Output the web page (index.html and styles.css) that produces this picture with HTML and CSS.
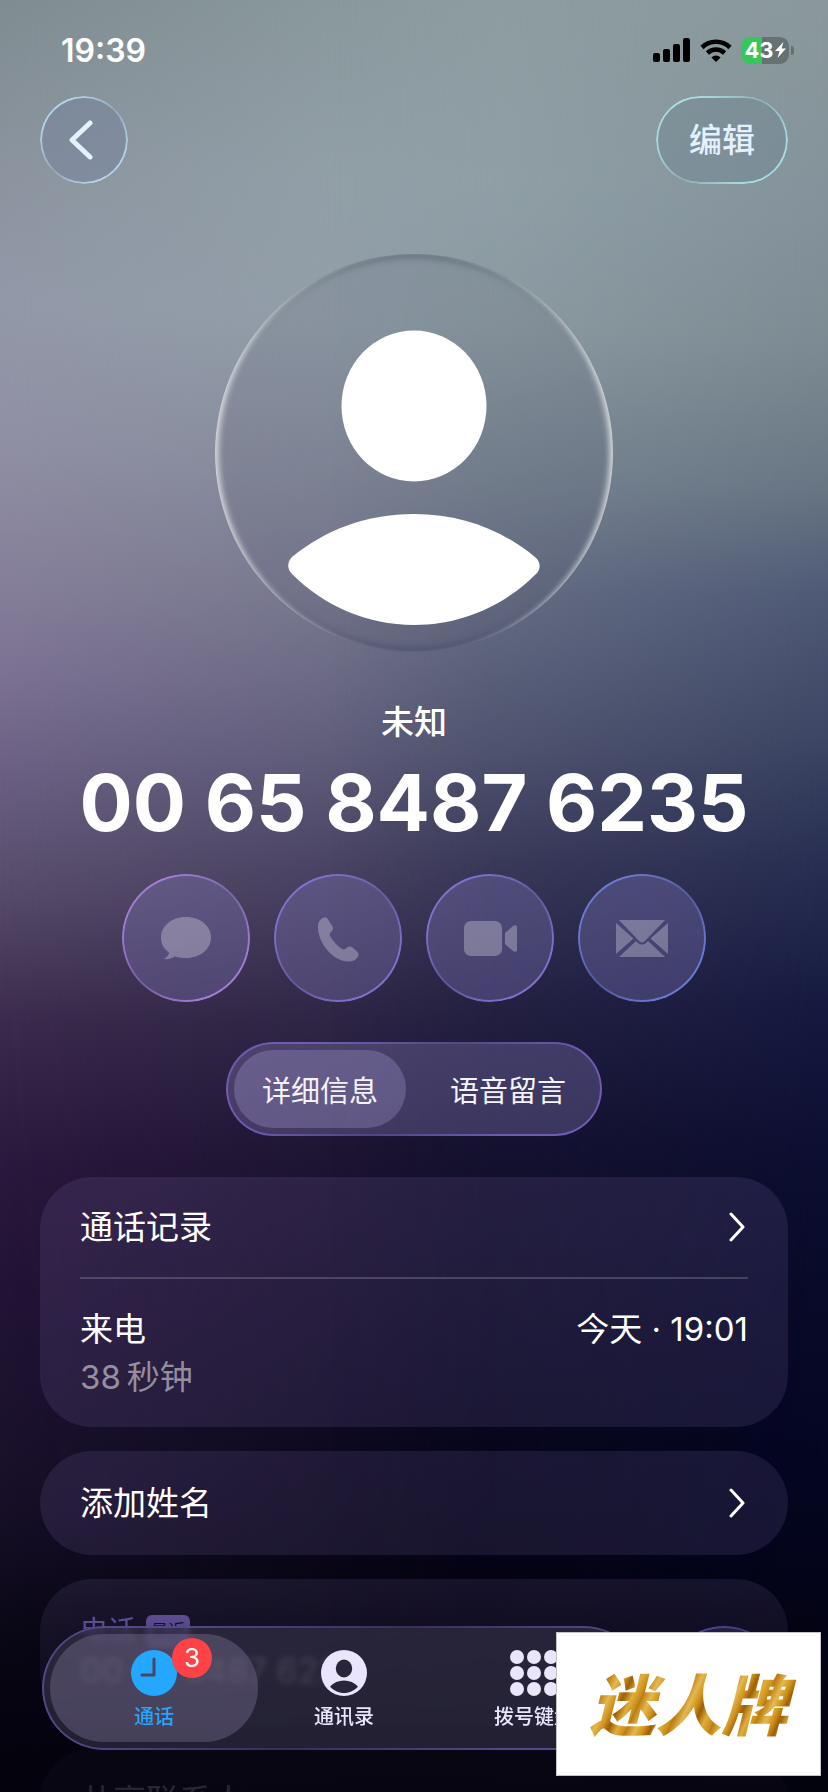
FILE: index.html
```html
<!DOCTYPE html>
<html lang="zh-CN">
<head>
    <meta charset="UTF-8">
    <meta name="viewport" content="width=device-width, initial-scale=1.0">
    <title>通话详情</title>
    <link rel="stylesheet" href="styles.css">
</head>
<body>
    <div class="screen">
        <div class="status-bar">
            <span class="status-time">19:39</span>
            <div class="status-icons">
                <svg class="signal" viewBox="0 0 38 24" aria-hidden="true">
                    <rect x="0" y="15" width="7" height="9" rx="2"/>
                    <rect x="10" y="11" width="7" height="13" rx="2"/>
                    <rect x="20" y="6" width="7" height="18" rx="2"/>
                    <rect x="30" y="0" width="7" height="24" rx="2"/>
                </svg>
                <svg class="wifi" viewBox="0 0 32 24" aria-hidden="true">
                    <path d="M2 9.5a20 20 0 0 1 28 0M7.4 15a12.5 12.5 0 0 1 17.2 0" fill="none" stroke="#000" stroke-width="4.6"/>
                    <path d="M16 24l-4.6-4.6a6.6 6.6 0 0 1 9.2 0z"/>
                </svg>
                <div class="battery">
                    <span>43</span>
                    <svg viewBox="0 0 11 16" aria-hidden="true"><path d="M8.5 0L0 9h4.5L2.5 16 11 6.5H6.5z"/></svg>
                </div>
            </div>
        </div>

        <header class="nav">
            <button class="glass nav-back" aria-label="返回">
                <svg viewBox="0 0 24 40" aria-hidden="true"><path d="M21 3L3 20l18 17"/></svg>
            </button>
            <button class="glass nav-edit">编辑</button>
        </header>

        <main>
            <div class="avatar">
                <svg viewBox="0 0 398 398" aria-hidden="true">
                    <ellipse cx="199" cy="152" rx="72.5" ry="75.5"/>
                    <path d="M77 303C110 276 151 260 199 260s88 16 121 43c6 5 6 12 1 17-32 32-75 51-122 51s-90-19-122-51c-5-5-5-12 0-17z"/>
                </svg>
            </div>
            <p class="caller-label">未知</p>
            <h1 class="caller-number">00 65 8487 6235</h1>

            <div class="actions">
                <button class="glass action" aria-label="信息">
                    <svg viewBox="0 0 54 54"><path d="M27 6C12.5 6 2 15 2 26.5c0 6.500 3 11.500 8 15 0 2.500-2 4.500-5 6.500 4 .5 8-.5 11-2.500 3 1 7 1.500 11 1.500 14.500 0 25-9 25-20.500S41.500 6 27 6z"/></svg>
                </button>
                <button class="glass action" aria-label="呼叫">
                    <svg viewBox="0 0 54 54"><path d="M7 16c0-5 2-7.500 5-9 2-1 4-.5 5 1.500l4.500 7c1 2 .5 3.500-1 5-2 2-2.500 3-1 5.500 3 5 7 9 11.500 12 2 1 3 .5 5-1.500 1.500-1.500 3.500-1.500 5.500 0l4.500 4c2 1.500 2 4 .5 6-2 2.500-4.500 4-9 4C23 50.500 7 33 7 16z"/></svg>
                </button>
                <button class="glass action" aria-label="视频通话">
                    <svg viewBox="0 0 54 54"><rect x="1" y="10" width="38" height="35" rx="7"/><path d="M42 22l8-7c2-1.500 4-1 4 1.500v22c0 2.500-2 3-4 1.500l-8-7z"/></svg>
                </button>
                <button class="glass action" aria-label="邮件">
                    <svg viewBox="0 0 54 54"><path d="M4 9h46L30.500 29.500c-2.500 2.500-4.500 2.500-7 0zM1 12l17.500 15.500L1 43zM53 12L35.500 27.500 53 43zM4 46l17-16 2 2c2.500 2 5.500 2 8 0l2-2 17 16z"/></svg>
                </button>
            </div>

            <div class="glass segmented" role="tablist">
                <button class="segment selected" role="tab" aria-selected="true">详细信息</button>
                <button class="segment" role="tab" aria-selected="false">语音留言</button>
            </div>

            <div class="cards">
                <section class="card">
                    <a class="row row-first" href="#history">
                        <span>通话记录</span>
                        <svg class="chevron" viewBox="0 0 16 30" aria-hidden="true"><path d="M2 2l12 13L2 28"/></svg>
                    </a>
                    <div class="call">
                        <div class="call-line">
                            <span>来电</span>
                            <time>今天 · 19:01</time>
                        </div>
                        <p class="duration">38&thinsp;秒钟</p>
                    </div>
                </section>

                <section class="card">
                    <a class="row" href="#name">
                        <span>添加姓名</span>
                        <svg class="chevron" viewBox="0 0 16 30" aria-hidden="true"><path d="M2 2l12 13L2 28"/></svg>
                    </a>
                </section>

                <section class="card phone-card">
                    <p class="phone-label">电话 <span class="recent">最近</span></p>
                    <p class="phone-number">00 65 8487 6235</p>
                </section>

                <section class="card share-card">
                    <a class="row" href="#share">共享联系人</a>
                </section>
            </div>
        </main>

        <div class="dock">
            <nav class="glass tabs">
                <a class="tab active" href="#calls">
                    <span class="tab-icon">
                        <svg viewBox="0 0 46 46" aria-hidden="true"><circle cx="23" cy="23" r="23"/><path class="hands" d="M23 9v16H11"/></svg>
                        <span class="badge">3</span>
                    </span>
                    <span>通话</span>
                </a>
                <a class="tab" href="#contacts">
                    <span class="tab-icon">
                        <svg viewBox="0 0 46 46" aria-hidden="true"><circle cx="23" cy="23" r="23"/><ellipse class="cut" cx="23" cy="18.5" rx="8.2" ry="9"/><path class="cut" d="M9 36.500c3.500-4 8.500-6 14-6s10.500 2 14 6c-3.500 4-8.500 6.500-14 6.500s-10.500-2.500-14-6.500z"/></svg>
                    </span>
                    <span>通讯录</span>
                </a>
                <a class="tab" href="#keypad">
                    <span class="tab-icon">
                        <svg class="keypad" viewBox="0 0 48 46" aria-hidden="true">
                            <circle cx="7" cy="7" r="7"/><circle cx="24" cy="7" r="7"/><circle cx="41" cy="7" r="7"/>
                            <circle cx="7" cy="23" r="7"/><circle cx="24" cy="23" r="7"/><circle cx="41" cy="23" r="7"/>
                            <circle cx="7" cy="39" r="7"/><circle cx="24" cy="39" r="7"/><circle cx="41" cy="39" r="7"/>
                        </svg>
                    </span>
                    <span>拨号键盘</span>
                </a>
            </nav>
            <button class="glass search" aria-label="搜索"></button>
        </div>

        <div class="brand"><span>迷人牌</span></div>
    </div>
</body>
</html>
```
FILE: styles.css
```css
* {
    box-sizing: border-box;
}

body {
    margin: 0;
    font-family: Inter, 'Noto Sans CJK SC', sans-serif;
    font-size: 33px;
    color: #fff;
    background: #05030f;
}

p, h1 {
    margin: 0;
}

button {
    font: inherit;
    color: inherit;
    border: 0;
    padding: 0;
    background: none;
}

a {
    color: inherit;
    text-decoration: none;
}

/* the wallpaper is three vertical gradients faded into each other */
.screen {
    position: relative;
    z-index: 0;
    height: 100vh;
    overflow: hidden;
    background: linear-gradient(#8f9fa3 0%, #95a5ab 10%, #92a1a8 18%, #808b98 26%, #6b7086 35%, #585a74 42%, #433f5e 48%, #2b2543 56%, #18132e 64%, #110d24 72%, #08061a 81%, #040210 90%, #03020c 100%);
}

.screen::before,
.screen::after {
    content: '';
    position: absolute;
    inset: 0;
    z-index: -1;
}

.screen::before {
    background: linear-gradient(#7f8c90 0%, #8b939e 9%, #9298a8 17%, #8f8fa3 25%, #857e99 33%, #7b7091 38%, #6b6083 43%, #564a68 50%, #3b2a4c 57%, #2a183d 65%, #221335 72%, #1a112c 81%, #0e0a1c 90%, #050310 100%);
    mask-image: linear-gradient(90deg, #000, transparent 60%);
}

.screen::after {
    background: linear-gradient(#8a989b 0%, #83929a 12%, #7c8b92 19%, #687684 27%, #4f5a76 33%, #3d4664 41%, #282f52 48%, #161a40 56%, #0d0f32 64%, #080a29 72%, #040622 81%, #030419 90%, #020210 100%);
    mask-image: linear-gradient(270deg, #000, transparent 60%);
}

/* glass surface with a rim lit from two corners */
.glass {
    --rim: #8270cf;
    position: relative;
    background: rgba(255, 255, 255, 0.1);
}

.glass::before {
    content: '';
    position: absolute;
    inset: 0;
    padding: 2px;
    border-radius: inherit;
    background: linear-gradient(135deg, var(--rim) 20%, transparent 50%, var(--rim) 80%);
    background-color: color-mix(in srgb, var(--rim) 40%, transparent);
    mask: linear-gradient(#000 0 0) content-box exclude, linear-gradient(#000 0 0);
    pointer-events: none;
}

.status-bar {
    height: 96px;
    padding: 4px 34px 0 61px;
    display: flex;
    justify-content: space-between;
    align-items: center;
}

.status-time {
    font-size: 32px;
    font-weight: 600;
}

.status-icons {
    display: flex;
    align-items: center;
    gap: 9px;
}

.signal {
    width: 38px;
    height: 24px;
}

.wifi {
    width: 32px;
    height: 24px;
}

.battery {
    position: relative;
    display: flex;
    align-items: center;
    justify-content: center;
    gap: 1px;
    width: 48px;
    height: 27px;
    margin-right: 5px;
    border-radius: 9px;
    background: linear-gradient(90deg, #34c759 43%, #667174 43%);
    font-size: 22px;
    font-weight: 700;
}

.battery svg {
    width: 11px;
    height: 16px;
    fill: #fff;
}

.battery::after {
    content: '';
    position: absolute;
    left: 50px;
    width: 3px;
    height: 9px;
    border-radius: 0 4px 4px 0;
    background: #667174;
}

.nav {
    display: flex;
    justify-content: space-between;
    padding: 0 40px;
    color: #e3f0ff;
}

.nav .glass {
    --rim: #a9dbe0;
    height: 88px;
    border-radius: 44px;
    background: rgba(90, 120, 135, 0.25);
}

.nav .nav-back {
    --rim: #b4d3e6;
    width: 88px;
    padding-right: 6px;
    background: rgba(110, 125, 155, 0.4);
}

.nav-back svg {
    display: block;
    width: 24px;
    height: 40px;
    margin: 0 auto;
    fill: none;
    stroke: #e3f0ff;
    stroke-width: 5;
    stroke-linecap: round;
    stroke-linejoin: round;
}

.nav .nav-edit {
    width: 132px;
    font-weight: 500;
    line-height: 40px;
}

main {
    text-align: center;
}

.avatar {
    width: 398px;
    height: 398px;
    margin: 70px auto 50px;
    border-radius: 50%;
    background: rgba(70, 75, 95, 0.12);
    box-shadow: inset 8px 0 6px -5px rgba(255, 255, 255, 0.8),
        inset -8px 0 6px -5px rgba(255, 255, 255, 0.8),
        inset 0 8px 6px -4px rgba(70, 85, 100, 0.5),
        inset 0 -8px 6px -4px rgba(60, 65, 95, 0.5);
}

.avatar svg {
    display: block;
    fill: #fff;
}

.caller-label {
    font-weight: 500;
    line-height: 40px;
}

.caller-number {
    margin-top: 20px;
    font-size: 79px;
    font-weight: 700;
    line-height: 80px;
    white-space: nowrap;
}

.actions {
    display: flex;
    justify-content: center;
    gap: 24px;
    margin-top: 32px;
}

.action {
    width: 128px;
    height: 128px;
    border-radius: 50%;
    background: rgba(130, 120, 190, 0.35);
}

.action:first-child {
    --rim: #a37cd8;
}

.action:last-child {
    --rim: #6b79d6;
}

.action svg {
    display: block;
    width: 54px;
    height: 54px;
    margin: 0 auto;
    fill: rgba(255, 255, 255, 0.28);
}

.segmented {
    --rim: #6f5bb4;
    display: inline-flex;
    margin-top: 40px;
    padding: 8px;
    border-radius: 47px;
    background: rgba(145, 135, 200, 0.31);
    font-size: 29px;
}

.segment {
    width: 172px;
    height: 78px;
    border-radius: 39px;
    color: #f4f2fa;
}

.segment:last-child {
    margin-left: 16px;
}

.segment.selected {
    background: rgba(170, 160, 215, 0.3);
}

.cards {
    display: flex;
    flex-direction: column;
    gap: 24px;
    padding: 41px 40px 0;
    text-align: left;
}

.card {
    border-radius: 52px;
    padding: 0 40px;
    background: rgba(150, 130, 200, 0.14);
}

.row {
    display: flex;
    justify-content: space-between;
    align-items: center;
    height: 104px;
    line-height: 40px;
}

.row-first {
    height: 102px;
    border-bottom: 2px solid rgba(255, 255, 255, 0.18);
}

.chevron {
    width: 16px;
    height: 30px;
    margin-right: 3px;
    fill: none;
    stroke: #fff;
    stroke-width: 3;
    stroke-linecap: round;
    stroke-linejoin: round;
}

.call {
    padding: 26px 0;
    line-height: 48px;
}

.call-line {
    display: flex;
    justify-content: space-between;
}

.duration {
    color: rgba(255, 255, 255, 0.5);
}

.phone-card {
    height: 146px;
    padding-top: 32px;
}

.phone-label {
    display: flex;
    gap: 10px;
    font-size: 28px;
    line-height: 40px;
    color: #8068c4;
}

.recent {
    height: 32px;
    margin-top: 4px;
    padding: 0 5px;
    border-radius: 6px;
    background: #7a64bb;
    font-size: 17px;
    line-height: 32px;
    color: #1b162b;
}

.phone-number {
    font-size: 34px;
    line-height: 40px;
    color: rgba(255, 255, 255, 0.7);
}

.share-card {
    color: rgba(255, 255, 255, 0.7);
}

/* the content fades to dark behind the dock */
.dock {
    position: absolute;
    left: 0;
    right: 0;
    bottom: 0;
    display: flex;
    gap: 16px;
    padding: 66px 42px 42px;
    background: linear-gradient(transparent, rgba(3, 2, 12, 0.3) 30%, rgba(3, 2, 12, 0.75) 80%, rgba(3, 2, 12, 0.8));
}

.tabs {
    --rim: #54478a;
    flex: 1;
    display: flex;
    justify-content: space-between;
    height: 124px;
    padding: 8px;
    border-radius: 62px;
    background: rgba(52, 48, 72, 0.66);
    backdrop-filter: blur(3px);
    font-size: 20px;
    font-weight: 500;
    color: #e9e5fd;
}

.tab {
    display: flex;
    flex-direction: column;
    align-items: center;
    gap: 6px;
    width: 208px;
    margin-right: -18px;
    padding-top: 16px;
    border-radius: 54px;
    line-height: 30px;
}

.tab:last-child {
    margin-right: 0;
}

.tab.active {
    background: rgba(130, 120, 155, 0.38);
    color: #23a7ff;
}

.tab-icon {
    position: relative;
    height: 46px;
}

.tab-icon svg {
    display: block;
    width: 46px;
    height: 46px;
    fill: currentColor;
}

.tab-icon .keypad {
    width: 48px;
}

.tab-icon .hands {
    fill: none;
    stroke: #4a4562;
    stroke-width: 3;
    stroke-linecap: round;
    stroke-linejoin: round;
}

.tab-icon .cut {
    fill: #282539;
}

.badge {
    position: absolute;
    top: -12px;
    left: 41px;
    width: 40px;
    height: 40px;
    border-radius: 50%;
    background: #ff4245;
    color: #fff;
    font-size: 26px;
    font-weight: 400;
    line-height: 40px;
    text-align: center;
}

.search {
    --rim: #4c4699;
    width: 124px;
    height: 124px;
    border-radius: 50%;
    background: rgba(40, 38, 70, 0.8);
}

.brand {
    position: absolute;
    right: 7px;
    bottom: 16px;
    display: flex;
    align-items: center;
    justify-content: center;
    width: 265px;
    height: 144px;
    border: 1px solid #c4c4c8;
    background: #fff;
}

/* side padding keeps the slanted glyph ends inside the clipped fill */
.brand span {
    padding: 4px 12px 0;
    font-size: 66px;
    font-weight: 900;
    font-style: italic;
    line-height: 100px;
    white-space: nowrap;
    color: transparent;
    background: repeating-linear-gradient(115deg, #b8780c 0, #e4b850 9px, #d0921a 16px, #9c5f06 22px, #e0ae3c 30px, #c98a14 38px);
    background-clip: text;
}
```
